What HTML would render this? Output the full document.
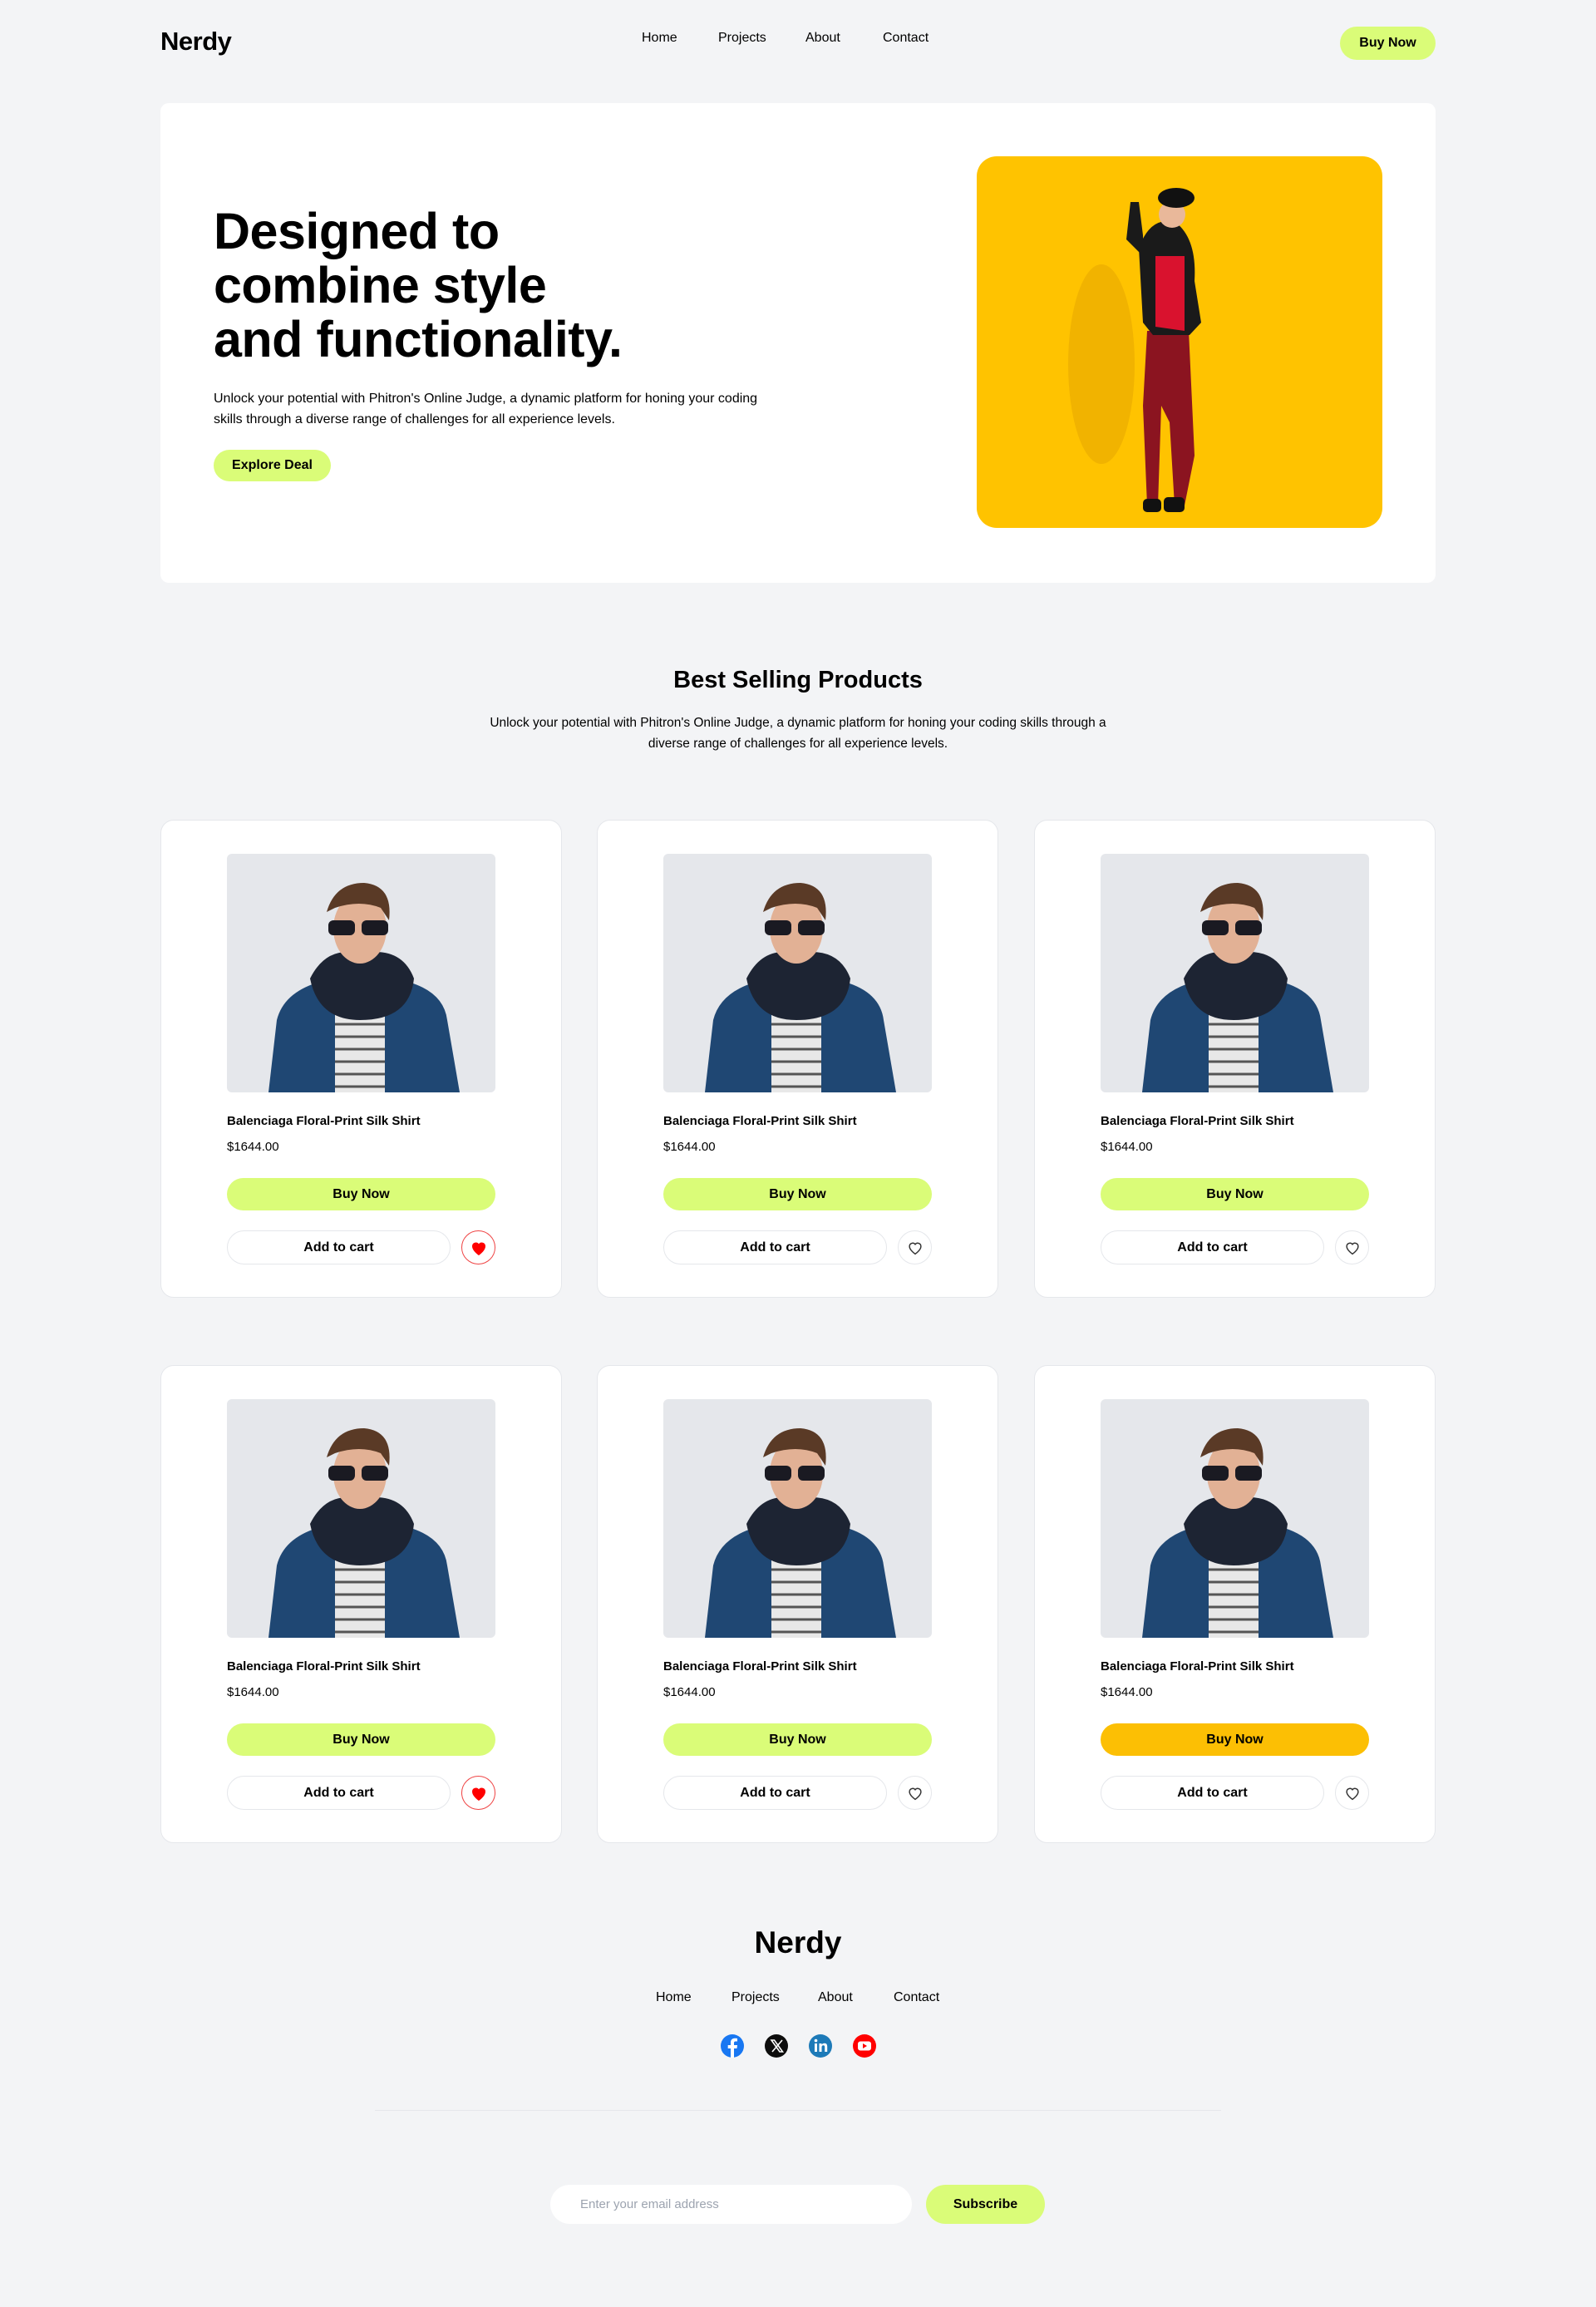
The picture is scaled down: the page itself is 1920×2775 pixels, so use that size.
<!DOCTYPE html>
<html><head><meta charset="utf-8">
<style>
*{box-sizing:border-box;margin:0;padding:0}
body{width:1920px;height:2775px;background:#f3f4f6;font-family:"Liberation Sans",sans-serif;color:#000;position:relative;overflow:hidden}
.a{position:absolute}
.logo{left:193px;top:32px;font-size:31px;font-weight:700;letter-spacing:-0.5px}
.nav{top:37px;font-size:16px}
.btn{display:flex;align-items:center;justify-content:center;font-weight:700;border-radius:999px}
.lime{background:#dafc78}
.card{width:483px;height:575px;background:#fff;border:1px solid #e5e7eb;border-radius:16px}
.card .img{left:79px;top:40px;width:323px;height:287px;background:#e5e7eb;border-radius:6px;overflow:hidden}
.card .t{left:79px;top:353px;font-size:15px;font-weight:700}
.card .p{left:79px;top:384px;font-size:15px}
.card .b{left:79px;top:430px;width:323px;height:39px;font-size:16px}
.card .c{left:79px;top:493px;width:269px;height:41px;border:1px solid #e5e7eb;font-size:16px;background:#fff}
.card .h{left:361px;top:493px;width:41px;height:41px;border:1px solid #e5e7eb;border-radius:50%;display:flex;align-items:center;justify-content:center}
.card .h.red{border-color:#ef4444}
</style></head><body>
<div class="a logo">Nerdy</div>
<div class="a nav" style="left:772px">Home</div>
<div class="a nav" style="left:864px">Projects</div>
<div class="a nav" style="left:969px">About</div>
<div class="a nav" style="left:1062px">Contact</div>
<div class="a btn lime" style="left:1612px;top:32px;width:115px;height:40px;font-size:16px">Buy Now</div>

<div class="a" style="left:193px;top:124px;width:1534px;height:577px;background:#fff;border-radius:10px"></div>
<div class="a" style="left:257px;top:246px;font-size:61px;font-weight:700;line-height:65px;letter-spacing:-0.5px">Designed to<br>combine style<br>and functionality.</div>
<div class="a" style="left:257px;top:468px;font-size:16px;line-height:24.5px;width:720px">Unlock your potential with Phitron's Online Judge, a dynamic platform for honing your coding<br>skills through a diverse range of challenges for all experience levels.</div>
<div class="a btn lime" style="left:257px;top:541px;width:141px;height:38px;font-size:16px">Explore Deal</div>
<div class="a" style="left:1175px;top:188px;width:488px;height:447px;background:#ffc300;border-radius:24px;overflow:hidden">
<svg width="488" height="447" viewBox="0 0 488 447">
<ellipse cx="150" cy="250" rx="40" ry="120" fill="#e8a800" opacity=".6"/>
<path d="M205 210 L255 210 L262 360 L250 420 L238 420 L232 320 L222 300 L218 420 L205 420 L200 300Z" fill="#8b1420"/>
<path d="M195 110 Q210 70 240 80 Q265 100 262 150 L270 200 L256 215 L212 215 L200 200Z" fill="#1a1a1a"/>
<path d="M215 120 L250 120 L250 210 L215 205Z" fill="#d9122e"/>
<path d="M200 120 L180 100 L185 55 L195 55 L200 95Z" fill="#1a1a1a"/>
<circle cx="235" cy="70" r="16" fill="#e9b89a"/>
<ellipse cx="240" cy="50" rx="22" ry="12" fill="#111"/>
<rect x="225" y="410" width="25" height="18" rx="5" fill="#111"/>
<rect x="200" y="412" width="22" height="16" rx="5" fill="#111"/>
</svg></div>

<div class="a" style="left:0;width:1920px;top:802px;text-align:center;font-size:29px;font-weight:700">Best Selling Products</div>
<div class="a" style="left:560px;width:800px;top:857px;text-align:center;font-size:15.5px;line-height:25px">Unlock your potential with Phitron's Online Judge, a dynamic platform for honing your coding skills through a<br>diverse range of challenges for all experience levels.</div>

<svg width="0" height="0" style="position:absolute"><defs>
<symbol id="man" viewBox="0 0 323 287">
<path d="M50 287 L60 200 Q70 160 130 150 L200 150 Q260 160 265 200 L280 287Z" fill="#1f4773"/>
<rect x="130" y="190" width="60" height="97" fill="#e8e8e8"/>
<g stroke="#555" stroke-width="3"><line x1="130" y1="205" x2="190" y2="205"/><line x1="130" y1="220" x2="190" y2="220"/><line x1="130" y1="235" x2="190" y2="235"/><line x1="130" y1="250" x2="190" y2="250"/><line x1="130" y1="265" x2="190" y2="265"/><line x1="130" y1="280" x2="190" y2="280"/></g>
<path d="M100 150 Q120 110 160 120 Q210 110 225 150 Q220 200 160 200 Q110 200 100 150Z" fill="#1d2433"/>
<ellipse cx="160" cy="90" rx="32" ry="42" fill="#e2b195"/>
<path d="M120 70 Q130 35 165 35 Q200 38 195 80 L185 65 Q160 55 130 65Z" fill="#5a3a26"/>
<rect x="122" y="80" width="32" height="18" rx="6" fill="#1a1a22"/><rect x="162" y="80" width="32" height="18" rx="6" fill="#1a1a22"/>
</symbol>
<symbol id="hr" viewBox="0 0 24 24"><path d="M12 21s-8-5.2-8-11a4.5 4.5 0 0 1 8-2.8A4.5 4.5 0 0 1 20 10c0 5.8-8 11-8 11z" fill="#ff0000"/></symbol>
<symbol id="ho" viewBox="0 0 24 24"><path d="M12 20s-7.5-4.8-7.5-10a4.2 4.2 0 0 1 7.5-2.6A4.2 4.2 0 0 1 19.5 10c0 5.2-7.5 10-7.5 10z" fill="none" stroke="#333" stroke-width="1.6"/></symbol>
</defs></svg>

<div class="a card" style="left:193px;top:986px"><div class="a img"><svg width="323" height="287"><use href="#man"/></svg></div><div class="a t">Balenciaga Floral-Print Silk Shirt</div><div class="a p">$1644.00</div><div class="a btn lime b">Buy Now</div><div class="a btn c">Add to cart</div><div class="a h red"><svg width="24" height="24"><use href="#hr"/></svg></div></div>
<div class="a card" style="left:718px;top:986px"><div class="a img"><svg width="323" height="287"><use href="#man"/></svg></div><div class="a t">Balenciaga Floral-Print Silk Shirt</div><div class="a p">$1644.00</div><div class="a btn lime b">Buy Now</div><div class="a btn c">Add to cart</div><div class="a h"><svg width="22" height="22"><use href="#ho"/></svg></div></div>
<div class="a card" style="left:1244px;top:986px"><div class="a img"><svg width="323" height="287"><use href="#man"/></svg></div><div class="a t">Balenciaga Floral-Print Silk Shirt</div><div class="a p">$1644.00</div><div class="a btn lime b">Buy Now</div><div class="a btn c">Add to cart</div><div class="a h"><svg width="22" height="22"><use href="#ho"/></svg></div></div>
<div class="a card" style="left:193px;top:1642px"><div class="a img"><svg width="323" height="287"><use href="#man"/></svg></div><div class="a t">Balenciaga Floral-Print Silk Shirt</div><div class="a p">$1644.00</div><div class="a btn lime b">Buy Now</div><div class="a btn c">Add to cart</div><div class="a h red"><svg width="24" height="24"><use href="#hr"/></svg></div></div>
<div class="a card" style="left:718px;top:1642px"><div class="a img"><svg width="323" height="287"><use href="#man"/></svg></div><div class="a t">Balenciaga Floral-Print Silk Shirt</div><div class="a p">$1644.00</div><div class="a btn lime b">Buy Now</div><div class="a btn c">Add to cart</div><div class="a h"><svg width="22" height="22"><use href="#ho"/></svg></div></div>
<div class="a card" style="left:1244px;top:1642px"><div class="a img"><svg width="323" height="287"><use href="#man"/></svg></div><div class="a t">Balenciaga Floral-Print Silk Shirt</div><div class="a p">$1644.00</div><div class="a btn b" style="background:#fcbf04">Buy Now</div><div class="a btn c">Add to cart</div><div class="a h"><svg width="22" height="22"><use href="#ho"/></svg></div></div>

<div class="a" style="left:0;width:1920px;top:2316px;text-align:center;font-size:37px;font-weight:700">Nerdy</div>
<div class="a nav" style="left:789px;top:2394px">Home</div>
<div class="a nav" style="left:880px;top:2394px">Projects</div>
<div class="a nav" style="left:984px;top:2394px">About</div>
<div class="a nav" style="left:1075px;top:2394px">Contact</div>
<svg class="a" style="left:866px;top:2446px" width="190" height="30" viewBox="0 0 190 30">
<circle cx="15" cy="15" r="14" fill="#1877f2"/><path d="M17 29 V18 h3.5 l.5-4 h-4 v-2.5 c0-1.2.4-2 2-2 h2 V6 c-.4 0-1.6-.2-3-.2 -3 0-5 1.8-5 5.1 V14 h-3.3 v4 H13 v11z" fill="#fff"/>
<circle cx="68" cy="15" r="14" fill="#0d0d0d"/><path d="M62 8 h3.5 l10 14 h-3.5z M75 8 L63 22" stroke="#fff" stroke-width="1.6" fill="none"/>
<circle cx="121" cy="15" r="14" fill="#1d7ab8"/><rect x="114" y="12" width="3" height="10" fill="#fff"/><circle cx="115.5" cy="8.6" r="1.8" fill="#fff"/><path d="M119.5 12 h3 v1.5 c.7-1.1 1.8-1.8 3.4-1.8 2.5 0 3.3 1.6 3.3 4.2 V22 h-3 v-5.5 c0-1.3-.4-2.2-1.7-2.2 -1.4 0-2 1-2 2.4 V22 h-3z" fill="#fff"/>
<circle cx="174" cy="15" r="14" fill="#f00"/><rect x="166" y="9.5" width="16" height="11" rx="3" fill="#fff"/><path d="M172 12 l5 3 -5 3z" fill="#f00"/>
</svg>
<div class="a" style="left:451px;top:2538px;width:1018px;height:1px;background:#e5e7eb"></div>
<div class="a" style="left:662px;top:2628px;width:435px;height:47px;background:#fff;border-radius:999px;font-size:15px;color:#9ca3af;padding-left:36px;line-height:47px">Enter your email address</div>
<div class="a btn lime" style="left:1114px;top:2628px;width:143px;height:47px;font-size:16px">Subscribe</div>
</body></html>
